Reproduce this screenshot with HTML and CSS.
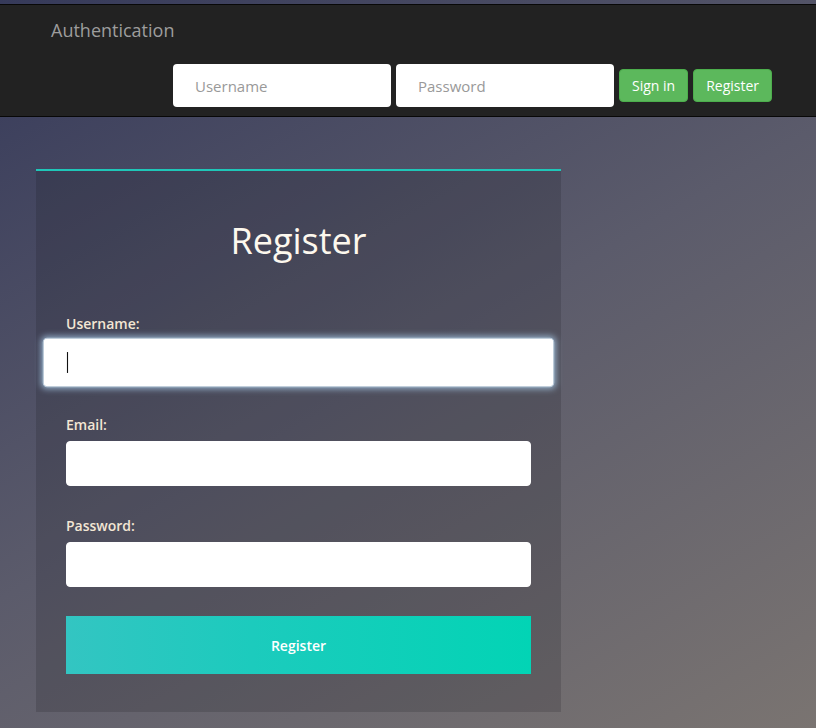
FILE: index.html
```html
<!DOCTYPE html>
<html lang="en">
<head>
<meta charset="utf-8">
<title>Authentication</title>
<link rel="stylesheet" href="styles.css">
</head>
<body>
<nav class="navbar">
  <div class="brand">Authentication</div>
  <form class="nav-form">
    <input class="nav-input" type="text" placeholder="Username">
    <input class="nav-input" type="password" placeholder="Password">
    <button class="btn-green" type="button">Sign in</button>
    <button class="btn-green" type="button">Register</button>
  </form>
</nav>
<main class="content">
  <section class="panel">
    <h2 class="panel-title">Register</h2>
    <div class="group">
      <label class="label">Username:</label>
      <div class="field focused">
        <input class="input" type="text">
        <span class="caret"></span>
      </div>
    </div>
    <div class="group">
      <label class="label">Email:</label>
      <div class="field"><input class="input" type="email"></div>
    </div>
    <div class="group last">
      <label class="label">Password:</label>
      <div class="field"><input class="input" type="password"></div>
    </div>
    <button class="btn-submit" type="button">Register</button>
  </section>
</main>
</body>
</html>
```
FILE: styles.css
```css
* { box-sizing: border-box; }
html, body { margin: 0; padding: 0; height: 100%; }
body {
  font-family: "Open Sans", "Noto Sans", sans-serif;
  background: linear-gradient(150deg, #363a5a 0%, #5b5b6b 50%, #7a7471 100%);
  background-color: #4a4a60;
  overflow: hidden;
}
.navbar {
  margin-top: 4px;
  background: #222222;
  border-top: 1px solid #080808;
  border-bottom: 1px solid #080808;
  display: flex;
  flex-direction: column;
}
.brand {
  padding: 15px 51px;
  height: 50px;
  font-size: 18px;
  line-height: 20px;
  color: #9d9d9d;
}
.nav-form {
  display: flex;
  align-items: center;
  gap: 5px;
  margin: 9px 0 9px 173px;
  height: 43px;
}
.nav-input {
  width: 218px;
  height: 43px;
  border: none;
  border-radius: 4px;
  background: #fff;
  padding: 0 22px;
  font-family: inherit;
  font-size: 15px;
  color: #555;
  outline: none;
}
.nav-input::placeholder { color: #999; }
.btn-green {
  height: 33px;
  padding: 0 12px;
  background: #5cb85c;
  border: 1px solid #4cae4c;
  border-radius: 4px;
  color: #fff;
  font-family: inherit;
  font-size: 14px;
  line-height: 20px;
}
.content {
  padding: 52px 36px 0 36px;
}
.panel {
  width: 525px;
  background: rgba(18, 18, 26, 0.17);
  border-top: 2px solid #1fc6b8;
  padding: 30px 30px 38px 30px;
  display: flex;
  flex-direction: column;
}
.panel-title {
  margin: 20px 0 53px 0;
  font-size: 36px;
  font-weight: 400;
  line-height: 40px;
  text-align: center;
  color: #fdf8ee;
}
.group {
  display: flex;
  flex-direction: column;
  margin-bottom: 30px;
}
.group.last { margin-bottom: 29px; }
.label {
  font-size: 14px;
  font-weight: 600;
  line-height: 20px;
  color: #f3e6d4;
  margin-bottom: 6px;
}
.field {
  position: relative;
  height: 45px;
}
.input {
  width: 100%;
  height: 45px;
  border: 1px solid #fff;
  border-radius: 4px;
  background: #fff;
  padding: 0 22px;
  font-family: inherit;
  font-size: 15px;
  outline: none;
}
.focused {
  transform: scale(1.1);
}
.focused .input {
  border-color: #b8c8d8;
  box-shadow: 0 0 6px 1px rgba(170, 205, 235, 0.75);
}
.caret {
  position: absolute;
  left: 22px;
  top: 13px;
  width: 1px;
  height: 19px;
  background: #111;
}
.btn-submit {
  height: 58px;
  border: none;
  background: linear-gradient(to right, #33c5c2 0%, #1ccbbd 40%, #02d4b5 100%);
  color: #fff;
  font-family: inherit;
  font-size: 14px;
  font-weight: 600;
}
```
